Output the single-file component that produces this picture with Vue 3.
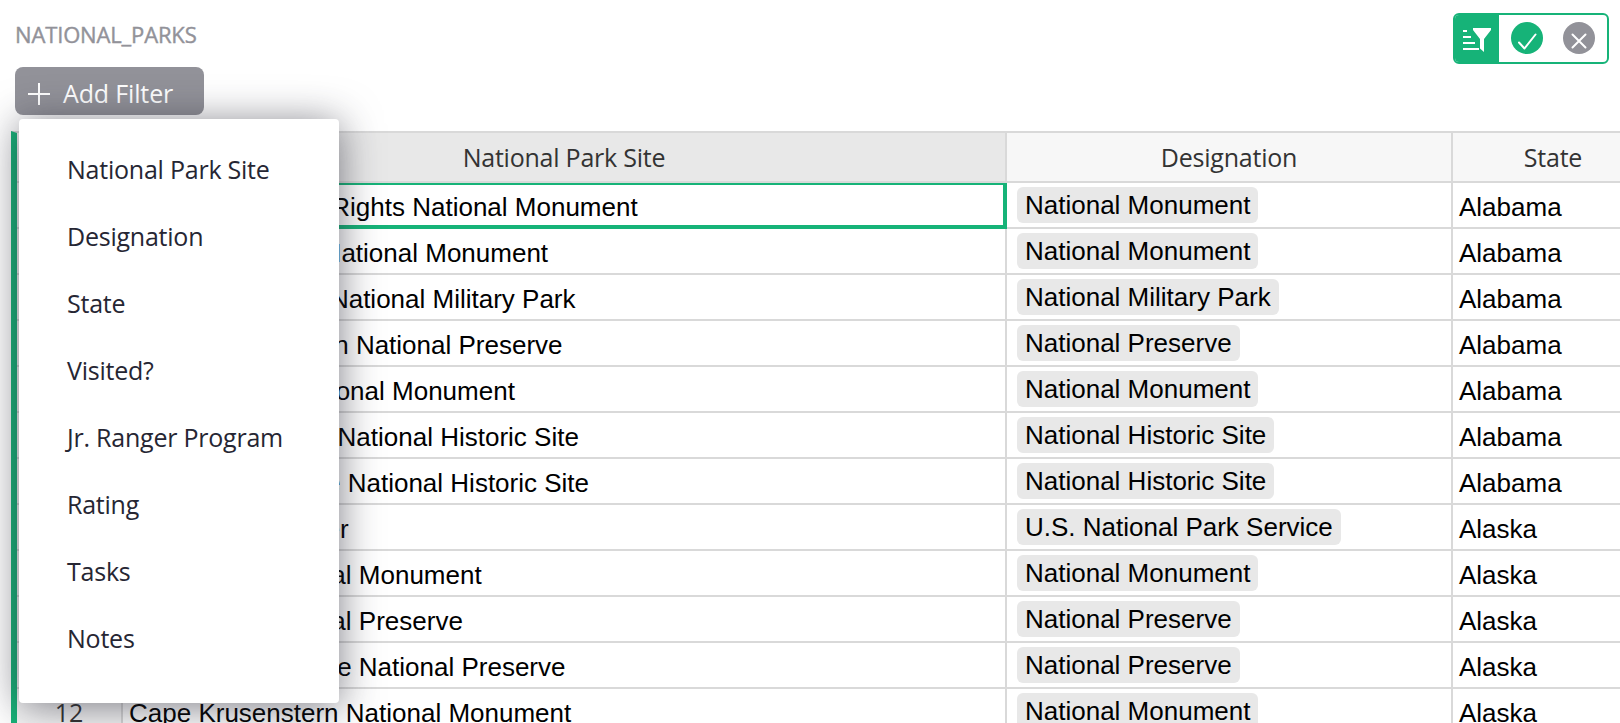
<script setup>
const fields = ['National Park Site', 'Designation', 'State', 'Visited?', 'Jr. Ranger Program', 'Rating', 'Tasks', 'Notes']

const rows = [
  ['Birmingham Civil Rights National Monument', 'National Monument', 'Alabama'],
  ['Freedom Riders National Monument', 'National Monument', 'Alabama'],
  ['Horseshoe Bend National Military Park', 'National Military Park', 'Alabama'],
  ['Little River Canyon National Preserve', 'National Preserve', 'Alabama'],
  ['Russell Cave National Monument', 'National Monument', 'Alabama'],
  ['Tuskegee Airmen National Historic Site', 'National Historic Site', 'Alabama'],
  ['Tuskegee Institute National Historic Site', 'National Historic Site', 'Alabama'],
  ['Alagnak Wild River', 'U.S. National Park Service', 'Alaska'],
  ['Aniakchak National Monument', 'National Monument', 'Alaska'],
  ['Aniakchak National Preserve', 'National Preserve', 'Alaska'],
  ['Bering Land Bridge National Preserve', 'National Preserve', 'Alaska'],
  ['Cape Krusenstern National Monument', 'National Monument', 'Alaska'],
]
</script>

<template>
  <div class="page">
    <header class="top">
      <div class="title">NATIONAL_PARKS</div>
      <div class="tools">
        <div class="sortfilter">
          <svg width="30" height="26" viewBox="0 0 30 26" fill="#fff">
            <path d="M0 2h4v2H0zM0 8h8v2H0zM0 14h12v2H0zM0 20h16v2H0z" />
            <path d="M10 0h18v2l-7 9v13l-4-3.500v-9.500l-7-9z" />
          </svg>
        </div>
        <svg class="round" width="32" height="32" viewBox="0 0 32 32">
          <circle cx="16" cy="16" r="16" fill="#16b378" />
          <path d="M8 20.500l5.500 6L24.500 12.500" fill="none" stroke="#fff" stroke-width="2" stroke-linecap="round" stroke-linejoin="round" />
        </svg>
        <svg class="round" width="32" height="32" viewBox="0 0 32 32">
          <circle cx="16" cy="16" r="16" fill="#929299" />
          <path d="M9.500 12.500l13 13M22.500 12.500l-13 13" fill="none" stroke="#fff" stroke-width="2" stroke-linecap="round" />
        </svg>
      </div>
    </header>

    <div class="filterbar">
      <button class="add">
        <svg width="22" height="22" viewBox="0 0 22 22"><path d="M11 0v22M0 11h22" stroke="#fff" stroke-width="2" /></svg>
        <span>Add Filter</span>
      </button>
      <div class="menu">
        <div v-for="f in fields" :key="f" class="item">{{ f }}</div>
      </div>
    </div>

    <div class="grid">
      <div class="row head">
        <div class="num"></div>
        <div class="name">National Park Site</div>
        <div class="desig">Designation</div>
        <div class="state">State</div>
      </div>
      <div v-for="(r, i) in rows" :key="i" class="row">
        <div class="num">{{ i + 1 }}</div>
        <div class="name" :class="{ active: i === 0 }"><span>{{ r[0] }}</span></div>
        <div class="desig"><span class="tag">{{ r[1] }}</span></div>
        <div class="state"><span>{{ r[2] }}</span></div>
      </div>
    </div>
  </div>
</template>

<style>
body { margin: 0; background: #fff; overflow: hidden; }
</style>

<style scoped>
* { box-sizing: border-box; }
.page {
  width: 1620px;
  height: 723px;
  overflow: hidden;
  background: #fff;
  font-family: "Open Sans", "Noto Sans", sans-serif;
}
.top {
  height: 67px;
  padding: 13px 11px 0 15px;
  display: flex;
  justify-content: space-between;
  align-items: flex-start;
}
.title {
  margin-top: 6px;
  font-size: 22px;
  line-height: 30px;
  font-weight: 500;
  letter-spacing: -0.15px;
  color: #929299;
  -webkit-text-stroke: 0.4px #929299;
}
.tools {
  width: 156px;
  height: 51px;
  border: 2px solid #16b378;
  border-radius: 6px;
  display: flex;
  align-items: flex-start;
  overflow: hidden;
}
.sortfilter {
  width: 44px;
  height: 47px;
  padding: 13px 0 0 8px;
  background: #16b378;
}
.sortfilter svg { display: block; }
.round { margin: 7px 8px 0 12px; flex: none; }
.filterbar { position: relative; height: 64px; padding-left: 15px; }
.add {
  width: 189px;
  height: 48px;
  border: 0;
  border-radius: 8px;
  padding: 0 0 0 13px;
  background: #929299;
  color: #fff;
  display: flex;
  align-items: center;
  font-family: inherit;
  font-size: 25px;
  line-height: 34px;
  letter-spacing: -0.15px;
}
.add svg { margin: 6px 13px 0 0; }
.add span { margin-top: 4px; }
.menu {
  position: absolute;
  z-index: 5;
  left: 19px;
  top: 52px;
  width: 320px;
  height: 584px;
  padding: 17px 0 31px;
  background: #fff;
  border-radius: 4px;
  box-shadow: 0 4px 40px rgba(38, 38, 51, 0.6);
}
.item {
  height: 67px;
  padding-left: 48px;
  font-size: 25px;
  line-height: 67px;
  letter-spacing: -0.23px;
  color: #262633;
  white-space: nowrap;
}
.grid {
  margin-left: 11px;
  border-left: 6px solid #16b378;
  border-top: 2px solid #d9d9d9;
  font-family: "Liberation Sans", Arial, sans-serif;
  font-size: 26px;
  color: #000;
}
.row {
  display: grid;
  grid-template-columns: 106px 884px 446px 202px;
  height: 46px;
}
.row > div {
  border-right: 2px solid #d9d9d9;
  border-bottom: 2px solid #d9d9d9;
  white-space: nowrap;
  overflow: hidden;
  line-height: 30px;
  padding: 9px 6px 0;
}
.row > .num {
  background: #f7f7f7;
  color: #333;
  text-align: center;
  font-family: "Open Sans", "Noto Sans", sans-serif;
  font-size: 25px;
  line-height: 34px;
  padding-top: 6px;
}
.row > .desig { padding: 4px 10px 0; }
.tag {
  display: block;
  width: max-content;
  height: 36px;
  padding: 0 8px;
  border-radius: 6px;
  background: #e8e8e8;
  line-height: 37px;
}
.row > .active {
  padding: 7px 6px 0;
  border-top: 2px solid #16b378;
  border-right: 4px solid #16b378;
  border-bottom: 4px solid #16b378;
}
.head { height: 50px; }
.row.head > div {
  padding: 0;
  background: #f7f7f7;
  color: #333;
  text-align: center;
  font-family: "Open Sans", "Noto Sans", sans-serif;
  font-size: 25px;
  line-height: 49px;
  letter-spacing: -0.23px;
}
.row.head > .name { background: #e8e8e8; }
</style>
